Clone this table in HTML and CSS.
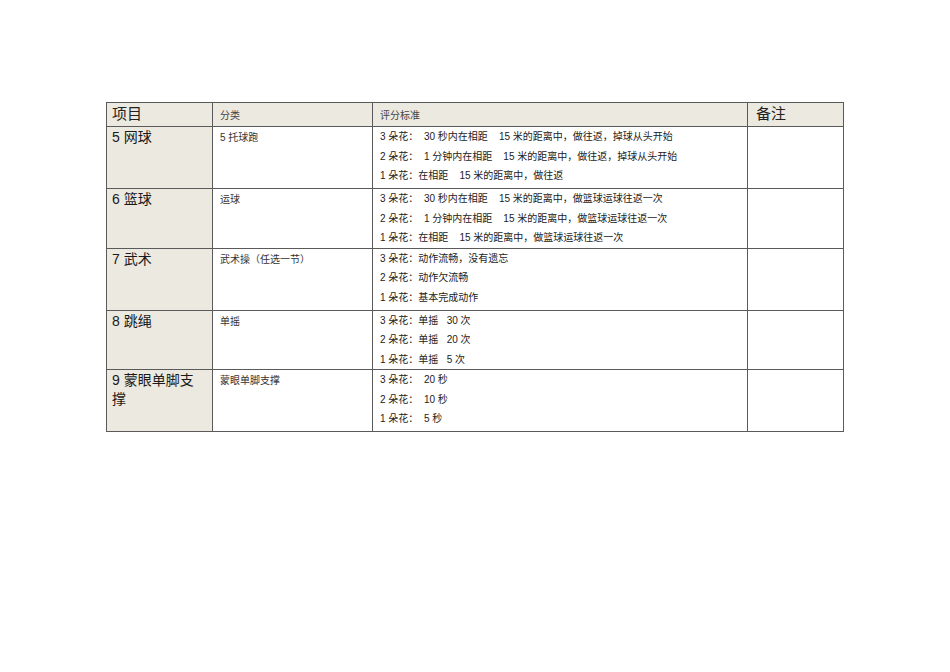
FILE: index.html
```html
<!DOCTYPE html>
<html lang="zh-CN">
<head>
<meta charset="utf-8">
<title>评分标准</title>
<link rel="stylesheet" href="styles.css">
</head>
<body>
<div class="page">
<table class="grid">
<colgroup>
<col class="c1"><col class="c2"><col class="c3"><col class="c4">
</colgroup>
<thead>
<tr class="head">
<th class="big first">项目</th>
<th class="small">分类</th>
<th class="small">评分标准</th>
<th class="big note">备注</th>
</tr>
</thead>
<tbody>
<tr class="r1">
<td class="item">5 网球</td>
<td class="cat">5 托球跑</td>
<td class="crit"><div class="ln">3 朵花：  30 秒内在相距    15 米的距离中，做往返，掉球从头开始</div><div class="ln">2 朵花：  1 分钟内在相距    15 米的距离中，做往返，掉球从头开始</div><div class="ln">1 朵花：在相距    15 米的距离中，做往返</div></td>
<td></td>
</tr>
<tr class="r2">
<td class="item">6 篮球</td>
<td class="cat">运球</td>
<td class="crit"><div class="ln">3 朵花：  30 秒内在相距    15 米的距离中，做篮球运球往返一次</div><div class="ln">2 朵花：  1 分钟内在相距    15 米的距离中，做篮球运球往返一次</div><div class="ln">1 朵花：在相距    15 米的距离中，做篮球运球往返一次</div></td>
<td></td>
</tr>
<tr class="r3">
<td class="item">7 武术</td>
<td class="cat">武术操（任选一节）</td>
<td class="crit"><div class="ln">3 朵花：动作流畅，没有遗忘</div><div class="ln">2 朵花：动作欠流畅</div><div class="ln">1 朵花：基本完成动作</div></td>
<td></td>
</tr>
<tr class="r4">
<td class="item">8 跳绳</td>
<td class="cat">单摇</td>
<td class="crit"><div class="ln">3 朵花：单摇   30 次</div><div class="ln">2 朵花：单摇   20 次</div><div class="ln">1 朵花：单摇   5 次</div></td>
<td></td>
</tr>
<tr class="r5">
<td class="item">9 蒙眼单脚支撑</td>
<td class="cat">蒙眼单脚支撑</td>
<td class="crit"><div class="ln">3 朵花：  20 秒</div><div class="ln">2 朵花：  10 秒</div><div class="ln">1 朵花：  5 秒</div></td>
<td></td>
</tr>
</tbody>
</table>
</div>
</body>
</html>
```
FILE: styles.css
```css
html, body {
  margin: 0;
  padding: 0;
  background: #ffffff;
}
.page {
  width: 950px;
  height: 672px;
  padding: 102px 0 0 106px;
  box-sizing: border-box;
  font-family: "Liberation Sans", "Noto Sans CJK SC", sans-serif;
  color: #222;
}
.grid {
  border-collapse: collapse;
  table-layout: fixed;
  width: 737px;
}
.c1 { width: 106px; }
.c2 { width: 160px; }
.c3 { width: 375px; }
.c4 { width: 96px; }
.grid th, .grid td {
  border: 1px solid #5a5a5a;
  padding: 0;
  text-align: left;
  font-weight: normal;
  vertical-align: top;
}
.grid .head th {
  background: #ece9e0;
  vertical-align: middle;
}
.head { height: 24px; }
.grid th.big {
  font-size: 15px;
  line-height: 18px;
  color: #222;
  padding-bottom: 2px;
}
.grid th.first { padding-left: 5px; }
.grid th.note { padding-left: 8px; }
.grid th.small {
  font-size: 10px;
  color: #444;
  padding-left: 7px;
}
.r1 { height: 62px; }
.r2 { height: 59px; }
.r3 { height: 62px; }
.r4 { height: 59px; }
.r5 { height: 62px; }
.grid td.item {
  background: #ece9e0;
  font-size: 14px;
  line-height: 19px;
  padding: 1px 10px 0 5px;
  color: #1a1a1a;
}
.grid td.cat {
  font-size: 10px;
  line-height: 19px;
  padding: 1px 0 0 7px;
  color: #333;
}
.grid td.crit {
  font-size: 10px;
  line-height: 19.5px;
  padding: 0 0 0 7px;
}
.ln {
  white-space: pre;
}
```
